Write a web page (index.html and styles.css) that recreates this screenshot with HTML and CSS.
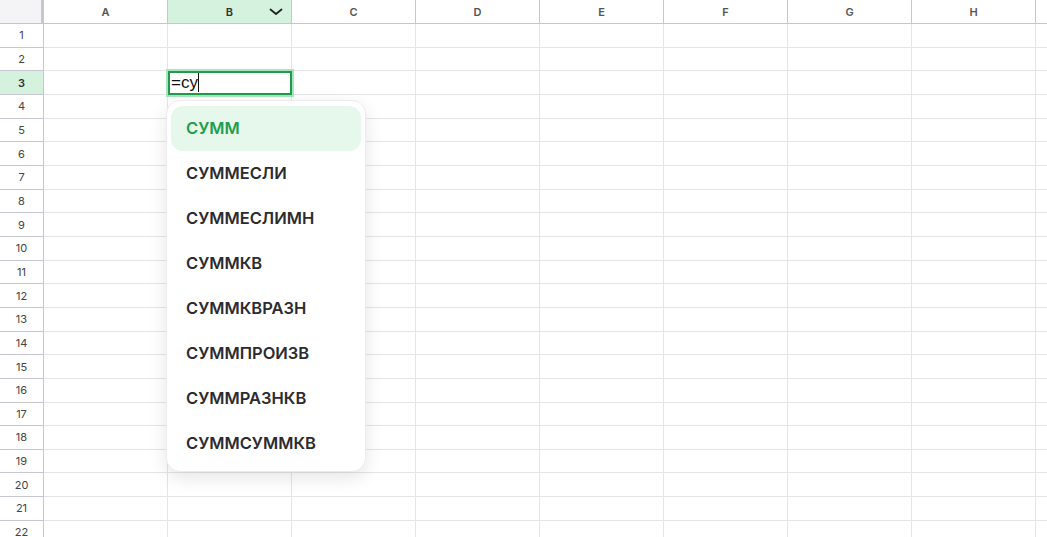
FILE: index.html
```html
<!DOCTYPE html>
<html lang="ru">
<head>
    <meta charset="UTF-8">
    <title>Таблица</title>
    <link rel="stylesheet" href="styles.css">
</head>
<body>
    <div class="sheet">
        <div class="head">
            <div class="corner"></div>
            <div class="col">A</div>
            <div class="col active">B
                <svg class="chev" width="14" height="8" viewBox="0 0 14 8"><path d="M1.5 1.5 L7 6 L12.5 1.5" fill="none" stroke="#222" stroke-width="1.8" stroke-linecap="round" stroke-linejoin="round"/></svg>
            </div>
            <div class="col">C</div>
            <div class="col">D</div>
            <div class="col">E</div>
            <div class="col">F</div>
            <div class="col">G</div>
            <div class="col">H</div>
            <div class="col"></div>
        </div>
        <div class="row"><div class="rh">1</div><div class="cells"></div></div>
        <div class="row"><div class="rh">2</div><div class="cells"></div></div>
        <div class="row"><div class="rh active">3</div><div class="cells"></div></div>
        <div class="row"><div class="rh">4</div><div class="cells"></div></div>
        <div class="row"><div class="rh">5</div><div class="cells"></div></div>
        <div class="row"><div class="rh">6</div><div class="cells"></div></div>
        <div class="row"><div class="rh">7</div><div class="cells"></div></div>
        <div class="row"><div class="rh">8</div><div class="cells"></div></div>
        <div class="row"><div class="rh">9</div><div class="cells"></div></div>
        <div class="row"><div class="rh">10</div><div class="cells"></div></div>
        <div class="row"><div class="rh">11</div><div class="cells"></div></div>
        <div class="row"><div class="rh">12</div><div class="cells"></div></div>
        <div class="row"><div class="rh">13</div><div class="cells"></div></div>
        <div class="row"><div class="rh">14</div><div class="cells"></div></div>
        <div class="row"><div class="rh">15</div><div class="cells"></div></div>
        <div class="row"><div class="rh">16</div><div class="cells"></div></div>
        <div class="row"><div class="rh">17</div><div class="cells"></div></div>
        <div class="row"><div class="rh">18</div><div class="cells"></div></div>
        <div class="row"><div class="rh">19</div><div class="cells"></div></div>
        <div class="row"><div class="rh">20</div><div class="cells"></div></div>
        <div class="row"><div class="rh">21</div><div class="cells"></div></div>
        <div class="row"><div class="rh">22</div><div class="cells"></div></div>

        <div class="editor">=су<span class="caret"></span></div>

        <ul class="suggest">
            <li class="selected">СУММ</li>
            <li>СУММЕСЛИ</li>
            <li>СУММЕСЛИМН</li>
            <li>СУММКВ</li>
            <li>СУММКВРАЗН</li>
            <li>СУММПРОИЗВ</li>
            <li>СУММРАЗНКВ</li>
            <li>СУММСУММКВ</li>
        </ul>
    </div>
</body>
</html>
```

FILE: styles.css
```css
body {
    margin: 0;
    background: #fff;
    font-family: Inter, "Noto Sans", sans-serif;
    overflow: hidden;
}

.sheet {
    position: relative;
    width: 1047px;
    height: 537px;
    overflow: hidden;
}

.head {
    display: flex;
    height: 24px;
}

.corner {
    flex: 0 0 44px;
    box-sizing: border-box;
    background: #f4f4f6;
    border-right: 3px solid #c6c5d0;
    border-bottom: 1px solid #c6c5d0;
}

.col {
    flex: 0 0 124px;
    box-sizing: border-box;
    position: relative;
    border-right: 1px solid #c6c5d0;
    border-bottom: 1px solid #c6c5d0;
    display: flex;
    align-items: center;
    justify-content: center;
    font-size: 11px;
    font-weight: 600;
    color: #555;
}

.col.active {
    background: #d5f2df;
    color: #333;
}

.chev {
    position: absolute;
    right: 8px;
    top: 8px;
}

.row {
    display: flex;
    height: 23.67px;
}

.rh {
    flex: 0 0 44px;
    box-sizing: border-box;
    border-right: 1px solid #c6c5d0;
    border-bottom: 1px solid #c6c5d0;
    display: flex;
    align-items: center;
    justify-content: center;
    font-size: 11px;
    color: #444;
}

.rh.active {
    background: #d5f2df;
    font-weight: 600;
    color: #333;
}

.cells {
    flex: 1;
    box-sizing: border-box;
    border-bottom: 1px solid #e5e5e8;
    background: repeating-linear-gradient(to right, transparent 0 123px, #e5e5e8 123px 124px);
}

.editor {
    position: absolute;
    left: 168px;
    top: 71px;
    width: 124px;
    height: 24px;
    box-sizing: border-box;
    border: 2px solid #1f9b4b;
    box-shadow: 0 0 0 2px #a9e3bf;
    background: #fff;
    padding-left: 1px;
    font-family: "Liberation Sans", Arial, sans-serif;
    font-size: 17px;
    line-height: 20px;
    color: #111;
}

.caret {
    display: inline-block;
    width: 1px;
    height: 19px;
    background: #111;
    vertical-align: -4px;
}

.suggest {
    position: absolute;
    left: 166px;
    top: 100px;
    width: 200px;
    margin: 0;
    padding: 5px 4px;
    box-sizing: border-box;
    list-style: none;
    background: #fff;
    border: 1px solid #ececef;
    border-radius: 14px;
    box-shadow: 0 6px 18px rgba(0, 0, 0, 0.10);
}

.suggest li {
    height: 45px;
    line-height: 45px;
    padding-left: 15px;
    border-radius: 12px;
    font-size: 16.5px;
    font-weight: 600;
    color: #2b2b30;
}

.suggest li.selected {
    background: #e6f7ec;
    color: #1f9e4e;
}
```
